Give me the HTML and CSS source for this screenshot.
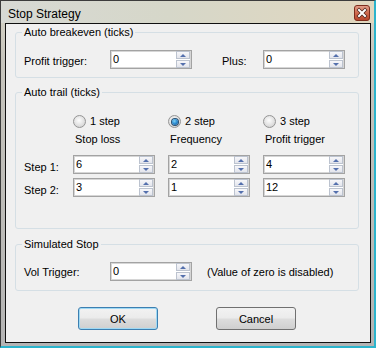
FILE: index.html
```html
<!DOCTYPE html>
<html lang="en">
<head>
    <meta charset="UTF-8">
    <title>Stop Strategy</title>
    <link rel="stylesheet" href="styles.css">
</head>
<body>
    <div class="window">
        <div class="titlebar">
            <span class="title">Stop Strategy</span>
            <button class="close" type="button">
                <svg width="16" height="16" viewBox="0 0 16 16">
                    <defs>
                        <linearGradient id="closeBg" x1="0" y1="0" x2="0" y2="1">
                            <stop offset="0" stop-color="#e4a08c"/>
                            <stop offset="0.5" stop-color="#cf6a4e"/>
                            <stop offset="1" stop-color="#b8442a"/>
                        </linearGradient>
                    </defs>
                    <rect x="0.5" y="0.5" width="15" height="15" rx="2.5" fill="url(#closeBg)" stroke="#7d2d1c"/>
                    <path d="M5 5 L11 11 M11 5 L5 11" stroke="#4a2218" stroke-width="3.4" stroke-linecap="square"/>
                    <path d="M5 5 L11 11 M11 5 L5 11" stroke="#ffffff" stroke-width="2" stroke-linecap="square"/>
                </svg>
            </button>
        </div>
        <div class="frame">
            <div class="client">
                <fieldset class="group group-breakeven">
                    <legend>Auto breakeven (ticks)</legend>
                    <div class="row">
                        <label class="lbl lbl-field">Profit trigger:</label>
                        <div class="spin">
                            <input class="spin-input" type="text" value="0">
                            <div class="spin-btns"><span class="spin-btn"><i class="arrow-up"></i></span><span class="spin-btn"><i class="arrow-down"></i></span></div>
                        </div>
                        <label class="lbl lbl-plus">Plus:</label>
                        <div class="spin">
                            <input class="spin-input" type="text" value="0">
                            <div class="spin-btns"><span class="spin-btn"><i class="arrow-up"></i></span><span class="spin-btn"><i class="arrow-down"></i></span></div>
                        </div>
                    </div>
                </fieldset>

                <fieldset class="group group-trail">
                    <legend>Auto trail (ticks)</legend>
                    <div class="trail-grid">
                        <span></span>
                        <label class="option"><span class="radio"></span>1 step</label>
                        <label class="option"><span class="radio checked"><span class="dot"></span></span>2 step</label>
                        <label class="option"><span class="radio"></span>3 step</label>

                        <span class="head-row"></span>
                        <span class="head head-row">Stop loss</span>
                        <span class="head head-row">Frequency</span>
                        <span class="head head-row">Profit trigger</span>

                        <label class="lbl lbl-step step-row">Step 1:</label>
                        <div class="spin step-row">
                            <input class="spin-input" type="text" value="6">
                            <div class="spin-btns"><span class="spin-btn"><i class="arrow-up"></i></span><span class="spin-btn"><i class="arrow-down"></i></span></div>
                        </div>
                        <div class="spin step-row">
                            <input class="spin-input" type="text" value="2">
                            <div class="spin-btns"><span class="spin-btn"><i class="arrow-up"></i></span><span class="spin-btn"><i class="arrow-down"></i></span></div>
                        </div>
                        <div class="spin step-row">
                            <input class="spin-input" type="text" value="4">
                            <div class="spin-btns"><span class="spin-btn"><i class="arrow-up"></i></span><span class="spin-btn"><i class="arrow-down"></i></span></div>
                        </div>

                        <label class="lbl lbl-step step-row-2">Step 2:</label>
                        <div class="spin step-row-2">
                            <input class="spin-input" type="text" value="3">
                            <div class="spin-btns"><span class="spin-btn"><i class="arrow-up"></i></span><span class="spin-btn"><i class="arrow-down"></i></span></div>
                        </div>
                        <div class="spin step-row-2">
                            <input class="spin-input" type="text" value="1">
                            <div class="spin-btns"><span class="spin-btn"><i class="arrow-up"></i></span><span class="spin-btn"><i class="arrow-down"></i></span></div>
                        </div>
                        <div class="spin step-row-2">
                            <input class="spin-input" type="text" value="12">
                            <div class="spin-btns"><span class="spin-btn"><i class="arrow-up"></i></span><span class="spin-btn"><i class="arrow-down"></i></span></div>
                        </div>
                    </div>
                </fieldset>

                <fieldset class="group group-sim">
                    <legend>Simulated Stop</legend>
                    <div class="row">
                        <label class="lbl lbl-field lbl-vol">Vol Trigger:</label>
                        <div class="spin">
                            <input class="spin-input" type="text" value="0">
                            <div class="spin-btns"><span class="spin-btn"><i class="arrow-up"></i></span><span class="spin-btn"><i class="arrow-down"></i></span></div>
                        </div>
                        <span class="lbl lbl-note">(Value of zero is disabled)</span>
                    </div>
                </fieldset>

                <div class="buttons">
                    <button class="btn btn-default" type="button">OK</button>
                    <button class="btn" type="button">Cancel</button>
                </div>
            </div>
        </div>
    </div>
</body>
</html>
```

FILE: styles.css
```css
* {
    box-sizing: border-box;
}
body {
    margin: 0;
    background-color: #2cb4cc;
    font-family: "Liberation Sans", Arial, sans-serif;
    font-size: 11px;
    color: #000;
}
.window {
    width: 376px;
    height: 348px;
    border-left: 1px solid #3c3c3c;
    border-top: 1px solid #3c3c3c;
    border-right: 2px solid #2cb4cc;
    border-bottom: 2px solid #2cb4cc;
    background: linear-gradient(to bottom, #d9d6c8 0px, #c6c4bc 60px, #b4b4b4 100%);
}
.titlebar {
    height: 22px;
    display: flex;
    justify-content: space-between;
    align-items: flex-start;
    padding: 0 4px 0 7px;
    background: linear-gradient(to right, #d7d9d4 0%, #d6d7c9 45%, #e1d7bf 100%);
}
.title {
    font-size: 12px;
    line-height: 14px;
    margin-top: 6px;
    color: #000;
}
.close {
    width: 16px;
    height: 16px;
    margin-top: 4px;
    padding: 0;
    border: 0;
    background: none;
    display: block;
}
.close svg {
    display: block;
}
.frame {
    padding: 0 3px 3px 4px;
}
.client {
    width: 366px;
    height: 320px;
    border: 1px solid #101010;
    background-color: #f0f0f0;
    padding-top: 2px;
}
.group {
    width: 344px;
    margin: 0 0 0 9px;
    min-width: 0;
    border: 1px solid #d5dfe5;
    border-radius: 3px;
    padding: 11px 13px 8px 8px;
}
.group legend {
    padding: 0 2px;
    margin-left: -2px;
    line-height: 13px;
}
.group-trail {
    margin-top: 8px;
    padding-top: 16px;
    padding-bottom: 31px;
}
.group-sim {
    margin-top: 9px;
    padding-bottom: 9px;
}
.row {
    display: flex;
    align-items: flex-start;
}
.lbl {
    line-height: 13px;
    white-space: nowrap;
}
.lbl-field {
    width: 86px;
    padding-top: 5px;
}
.lbl-vol {
    padding-top: 4px;
}
.lbl-plus {
    width: 41px;
    margin-left: 30px;
    padding-top: 5px;
}
.lbl-note {
    margin-left: 15px;
    padding-top: 4px;
}
.spin {
    width: 82px;
    height: 19px;
    display: flex;
    border: 1px solid #a3a3a3;
    box-shadow: inset 0 0 0 1px #d6d6d6;
    background-color: #fff;
}
.spin-input {
    flex: 1;
    min-width: 0;
    border: 0;
    outline: none;
    background: transparent;
    font-family: "Liberation Sans", Arial, sans-serif;
    font-size: 11px;
    color: #000;
    padding: 0 0 0 2px;
    height: 17px;
    line-height: 17px;
}
.spin-btns {
    width: 15px;
    display: flex;
    flex-direction: column;
    gap: 1px;
    padding-right: 1px;
}
.spin-btn {
    height: 8px;
    display: flex;
    justify-content: center;
    align-items: center;
    border: 1px solid #bcc3cf;
    background: linear-gradient(to bottom, #f7f7fa, #e3e5ec);
}
.arrow-up {
    width: 0;
    height: 0;
    border-left: 3px solid transparent;
    border-right: 3px solid transparent;
    border-bottom: 3px solid #5470ad;
}
.arrow-down {
    width: 0;
    height: 0;
    border-left: 3px solid transparent;
    border-right: 3px solid transparent;
    border-top: 3px solid #5470ad;
}
.trail-grid {
    display: grid;
    grid-template-columns: 49px 95px 95px 82px;
}
.option {
    display: flex;
    align-items: center;
    gap: 4px;
    line-height: 13px;
    height: 13px;
}
.radio {
    width: 13px;
    height: 13px;
    border-radius: 50%;
    border: 1px solid #959595;
    background: radial-gradient(circle at 45% 40%, #fdfdfd 0%, #e6e6e6 45%, #c9c9c9 100%);
    display: flex;
    justify-content: center;
    align-items: center;
}
.radio .dot {
    width: 6px;
    height: 6px;
    border-radius: 50%;
    background: radial-gradient(circle at 40% 35%, #7fd2f6 0%, #2a8ad0 50%, #1a4f88 100%);
    box-shadow: 0 0 0 1px #284f70;
}
.head {
    padding-left: 2px;
    line-height: 13px;
}
.head-row {
    margin-top: 5px;
}
.step-row {
    margin-top: 9px;
}
.step-row-2 {
    margin-top: 4px;
}
.lbl-step {
    padding-top: 6px;
}
.buttons {
    display: flex;
    gap: 58px;
    padding-left: 72px;
    margin-top: 16px;
}
.btn {
    width: 80px;
    height: 23px;
    border: 1px solid #707070;
    border-radius: 3px;
    background: linear-gradient(to bottom, #f2f2f2 0%, #ebebeb 48%, #dddddd 52%, #cfcfcf 100%);
    font-family: "Liberation Sans", Arial, sans-serif;
    font-size: 11px;
    color: #000;
    padding: 0;
}
.btn-default {
    border-color: #3c7fb1;
    box-shadow: inset 0 0 0 1px #9fd9f4;
}
```
